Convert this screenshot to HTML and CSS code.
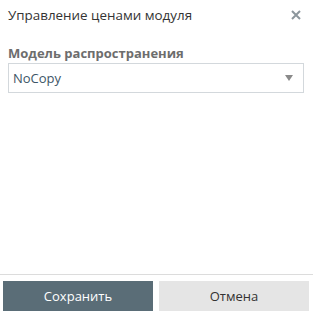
FILE: index.html
```html
<!DOCTYPE html>
<html lang="ru">
<head>
  <meta charset="UTF-8" />
  <title>Управление ценами модуля</title>
  <link rel="stylesheet" href="styles.css">
</head>
<body>
  <div class="dialog">
    <header class="dialog-header">
      <h2 class="dialog-title">Управление ценами модуля</h2>
      <button class="close-btn" aria-label="Закрыть">
        <svg width="10" height="10" viewBox="0 0 10 10">
          <path d="M1 1 L9 9 M9 1 L1 9" stroke="#8c969c" stroke-width="2" />
        </svg>
      </button>
    </header>

    <main class="dialog-body">
      <label class="field-label" for="model">Модель распространения</label>
      <div class="select">
        <span class="select-value">NoCopy</span>
        <span class="select-arrow"></span>
      </div>
    </main>

    <footer class="dialog-footer">
      <button class="btn btn-primary">Сохранить</button>
      <button class="btn btn-secondary">Отмена</button>
    </footer>
  </div>
</body>
</html>
```

FILE: styles.css
```css
* {
  box-sizing: border-box;
}

body {
  margin: 0;
  font-family: "Open Sans", "Liberation Sans", sans-serif;
  background: #ffffff;
  color: #333333;
}

.dialog {
  width: 313px;
  height: 315px;
  display: flex;
  flex-direction: column;
}

.dialog-header {
  display: flex;
  align-items: center;
  justify-content: space-between;
  padding: 0 12px 2px 8px;
  height: 31px;
}

.dialog-title {
  margin: 0;
  font-size: 13.4px;
  font-weight: 400;
  color: #333333;
}

.close-btn {
  border: none;
  background: none;
  padding: 0;
  width: 10px;
  height: 10px;
  display: flex;
  cursor: pointer;
}

.dialog-body {
  flex: 1;
  padding: 13px 9px 0 8px;
}

.field-label {
  display: block;
  font-size: 13px;
  font-weight: 700;
  color: #6d6d6d;
  margin-bottom: 1px;
}

.select {
  display: flex;
  align-items: center;
  justify-content: space-between;
  height: 30px;
  border: 1px solid #d3d8dc;
  padding: 0 10px 0 4px;
}

.select-value {
  font-size: 13px;
  color: #3d5566;
}

.select-arrow {
  width: 0;
  height: 0;
  border-left: 4px solid transparent;
  border-right: 4px solid transparent;
  border-top: 6px solid #8a8a8a;
}

.dialog-footer {
  border-top: 1px solid #dcdcdc;
  display: flex;
  gap: 6px;
  padding: 6px 4px 4px 3px;
}

.btn {
  flex: 1;
  height: 30px;
  border: none;
  font-family: inherit;
  font-size: 13px;
  cursor: pointer;
}

.btn-primary {
  background: #5a6d77;
  color: #ffffff;
}

.btn-secondary {
  background: #e5e5e5;
  color: #333333;
}
```
